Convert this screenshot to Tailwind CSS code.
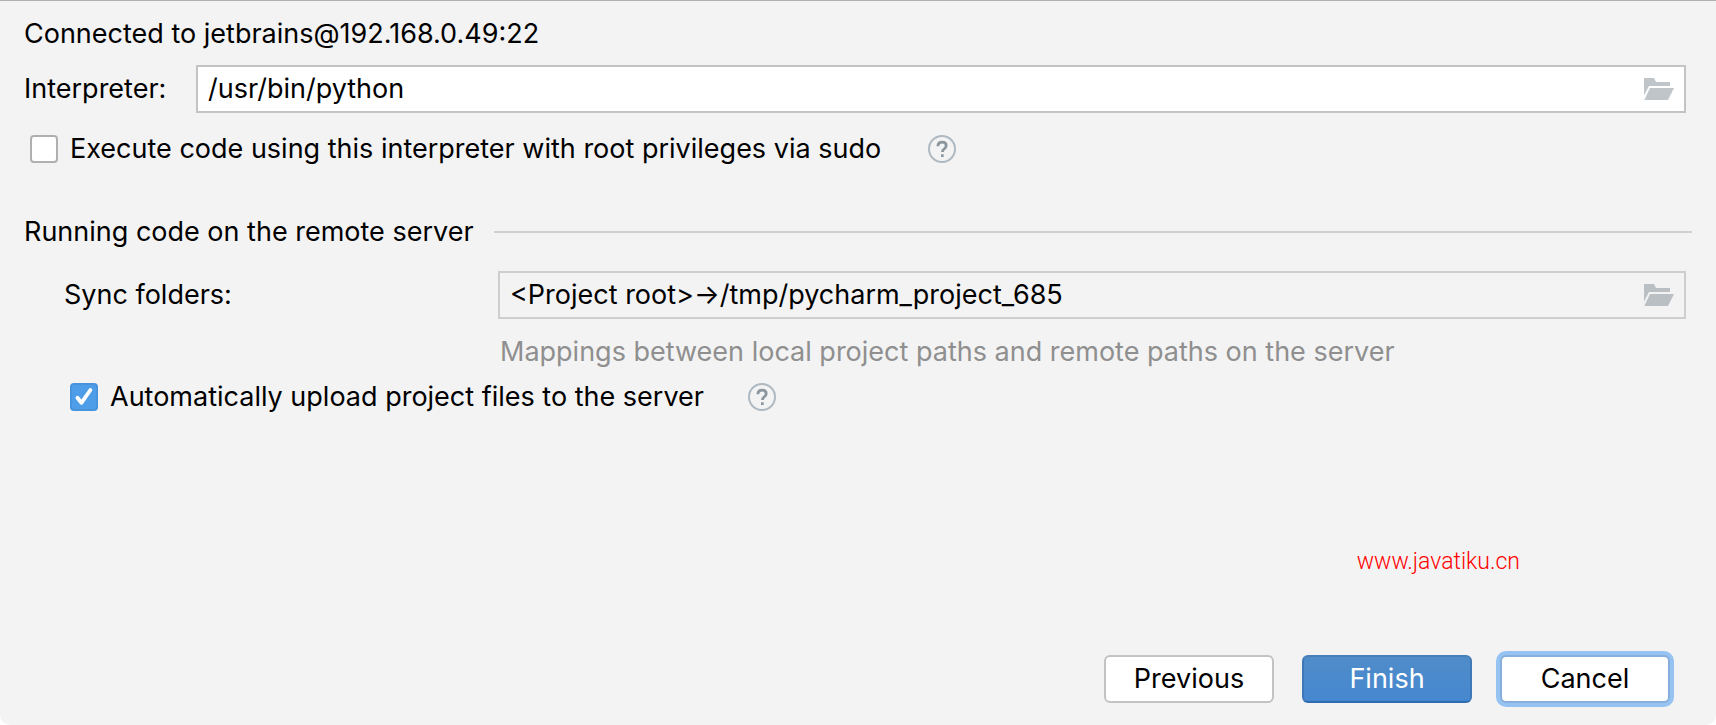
<!DOCTYPE html>
<html lang="en">
<head>
    <meta charset="UTF-8">
    <meta name="viewport" content="width=device-width, initial-scale=1.0">
    <title>Add Python Interpreter</title>
    <script src="https://cdn.jsdelivr.net/npm/@tailwindcss/browser@4"></script>
</head>
<body class="bg-white font-['Inter','Liberation_Sans',sans-serif] text-[27px] leading-8 text-black">
<form class="min-h-screen flex flex-col bg-[#f3f3f3] border-t border-[#b0b0b0] rounded-b-[10px] pt-[17px] pb-[22px] pl-6 pr-[30px]">
    <p>Connected to jetbrains@192.168.0.49:22</p>

    <!-- Interpreter path -->
    <div class="mt-[15px] flex items-center">
        <label for="interpreter" class="w-[172px] shrink-0">Interpreter:</label>
        <div class="flex flex-1 items-center h-12 bg-white border-2 border-[#c3c3c3] pl-[10px] pr-[10px]">
            <input id="interpreter" type="text" value="/usr/bin/python" class="flex-1 min-w-0 bg-transparent outline-none">
            <button type="button" aria-label="Browse interpreter">
                <svg width="30" height="22" viewBox="0 0 30 22" fill="#bfc5c9">
                    <path d="M0 0H10L12 4H26V8H5L0 17.5Z"/>
                    <path d="M6 10H30L24 22H0.3Z"/>
                </svg>
            </button>
        </div>
    </div>

    <div class="mt-5 flex items-center pl-[6px]">
        <input id="sudo" type="checkbox" class="appearance-none size-7 shrink-0 bg-white border-2 border-[#b0b0b0] rounded-[4px]">
        <label for="sudo" class="ml-3 min-w-[836px]">Execute code using this interpreter with root privileges via sudo</label>
        <button type="button" aria-label="Help: sudo" class="ml-[22px]">
            <svg width="28" height="28" viewBox="0 0 28 28" fill="none">
                <circle cx="14" cy="14" r="13" stroke="#afb9c1" stroke-width="2"/>
                <path d="M9.9 11.2C10 8.7 11.7 7.2 14.1 7.2C16.5 7.2 18.2 8.6 18.2 10.7C18.2 12.3 17.3 13.1 16.1 14C15 14.8 14.4 15.3 14.4 17" stroke="#8b969e" stroke-width="2.8"/>
                <path d="M13 19.3H15.7V22H13Z" fill="#8b969e"/>
            </svg>
        </button>
    </div>

    <!-- Remote server settings -->
    <div class="mt-[51px] -mr-[6px] flex items-center">
        <h2 class="min-w-[458px]">Running code on the remote server</h2>
        <hr class="ml-3 flex-1 border-t-2 border-[#d0d0d0]">
    </div>

    <div class="mt-[23px] pl-10 flex items-center">
        <label for="sync" class="w-[434px] shrink-0">Sync folders:</label>
        <div class="flex flex-1 items-center h-12 border-2 border-[#cecece] pl-[10px] pr-[10px]">
            <input id="sync" type="text" readonly value="&lt;Project root&gt;→/tmp/pycharm_project_685" class="flex-1 min-w-0 bg-transparent outline-none">
            <button type="button" aria-label="Browse sync folders">
                <svg width="30" height="22" viewBox="0 0 30 22" fill="#b9bfc3">
                    <path d="M0 0H10L12 4H26V8H5L0 17.5Z"/>
                    <path d="M6 10H30L24 22H0.3Z"/>
                </svg>
            </button>
        </div>
    </div>
    <p class="mt-[17px] pl-[476px] text-[#8f8f8f]">Mappings between local project paths and remote paths on the server</p>

    <div class="mt-[13px] flex items-center pl-[46px]">
        <span class="grid shrink-0">
            <input id="upload" type="checkbox" checked class="col-start-1 row-start-1 appearance-none size-7 bg-[#4d9de8] border-2 border-[#4794dc] rounded-[4px]">
            <svg class="col-start-1 row-start-1 pointer-events-none" width="28" height="28" viewBox="0 0 28 28" fill="none">
                <path d="M7.4 14.8L11.4 19.8L20.4 7" stroke="#fff" stroke-width="3.8" stroke-linecap="round" stroke-linejoin="round"/>
            </svg>
        </span>
        <label for="upload" class="ml-3 min-w-[616px]">Automatically upload project files to the server</label>
        <button type="button" aria-label="Help: upload" class="ml-[22px]">
            <svg width="28" height="28" viewBox="0 0 28 28" fill="none">
                <circle cx="14" cy="14" r="13" stroke="#afb9c1" stroke-width="2"/>
                <path d="M9.9 11.2C10 8.7 11.7 7.2 14.1 7.2C16.5 7.2 18.2 8.6 18.2 10.7C18.2 12.3 17.3 13.1 16.1 14C15 14.8 14.4 15.3 14.4 17" stroke="#8b969e" stroke-width="2.8"/>
                <path d="M13 19.3H15.7V22H13Z" fill="#8b969e"/>
            </svg>
        </button>
    </div>

    <p class="mt-auto mb-[77px] pr-[166px] text-right text-[23px] font-light text-[#ff0000] font-['Roboto','Liberation_Sans',sans-serif]">www.javatiku.cn</p>

    <!-- Wizard buttons -->
    <div class="flex justify-end gap-7 pr-4">
        <button type="button" class="w-[170px] h-12 bg-white border-2 border-[#c3c3c3] rounded-[6px]">Previous</button>
        <button type="submit" class="w-[170px] h-12 bg-linear-to-b from-[#4f8cc9] to-[#4688cf] border-2 border-t-[#487fb9] border-x-[#3f78b6] border-b-[#306cb2] rounded-[6px] text-white">Finish</button>
        <button type="button" class="w-[170px] h-12 bg-white border-2 border-[#87afdb] rounded-[6px] ring-4 ring-[#97c3f3]">Cancel</button>
    </div>
</form>
</body>
</html>
